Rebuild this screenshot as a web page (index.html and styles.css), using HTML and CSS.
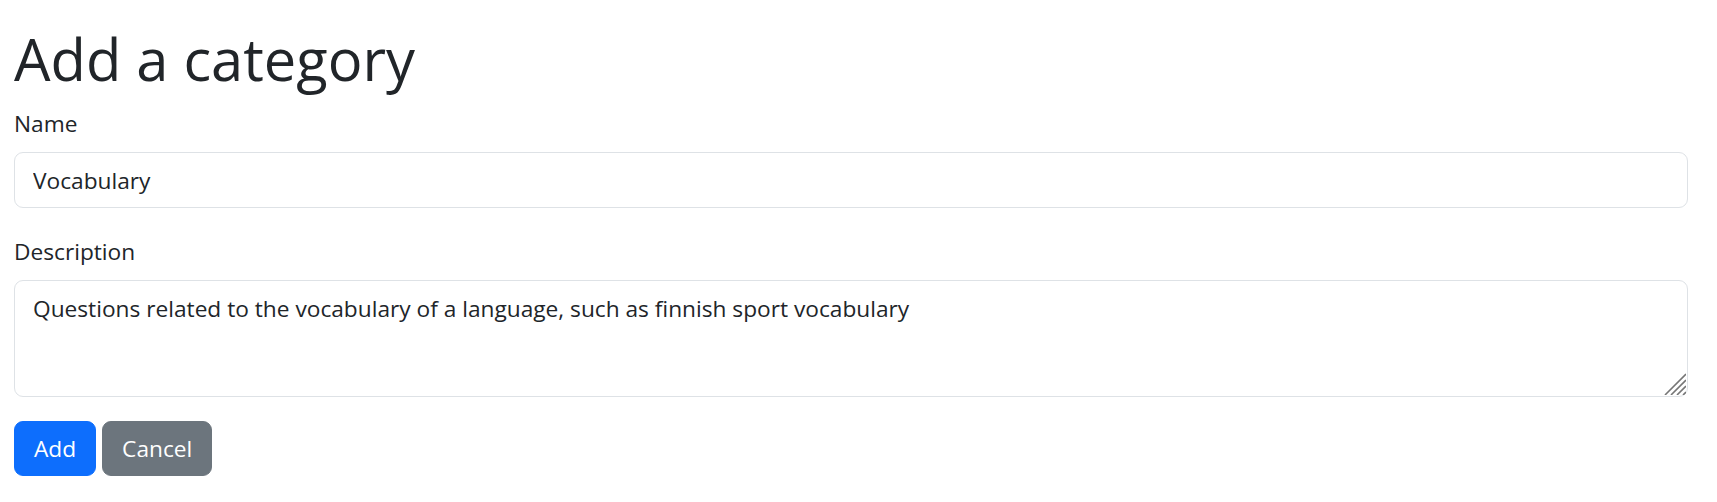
FILE: index.html
```html
<!DOCTYPE html>
<html lang="en">
<head>
<meta charset="utf-8">
<title>Add a category</title>
<link rel="stylesheet" href="styles.css">
</head>
<body>
<main class="page">
  <h1 class="title">Add a category</h1>
  <form class="form">
    <div class="field">
      <label class="label" for="name">Name</label>
      <input class="control" id="name" type="text" value="Vocabulary">
    </div>
    <div class="field">
      <label class="label" for="desc">Description</label>
      <div class="textarea-wrap">
        <textarea class="control textarea" id="desc">Questions related to the vocabulary of a language, such as finnish sport vocabulary</textarea>
        <svg class="grip" width="22" height="22" viewBox="0 0 22 22" aria-hidden="true">
          <path d="M22 1 L1 22 M22 7 L7 22 M22 13 L13 22 M22 19 L19 22" stroke="#767676" stroke-width="1.6" fill="none"/>
        </svg>
      </div>
    </div>
    <div class="actions">
      <button type="button" class="btn btn-primary">Add</button>
      <button type="button" class="btn btn-secondary">Cancel</button>
    </div>
  </form>
</main>
</body>
</html>
```
FILE: styles.css
```css
html, body {
  margin: 0;
  background: #fff;
}
body {
  font-family: "Open Sans", "Noto Sans", sans-serif;
  font-size: 22.7px;
  line-height: 36px;
  color: #212529;
}
.page {
  padding: 24px 29px 0 14px;
}
.title {
  margin: 0 0 9.4px;
  font-size: 57.8px;
  line-height: 70.6px;
  font-weight: 400;
  color: #212529;
}
.form {
  display: flex;
  flex-direction: column;
}
.field {
  display: flex;
  flex-direction: column;
  margin-bottom: 24px;
}
.label {
  display: block;
  padding-top: 2px;
  margin-bottom: 10px;
  line-height: 36px;
}
.control {
  display: block;
  box-sizing: border-box;
  width: 100%;
  height: 56px;
  margin: 0;
  padding: 10px 18px 8px;
  font-family: inherit;
  font-size: 22.7px;
  line-height: 36px;
  color: #212529;
  background: #fff;
  border: 1px solid #dee2e6;
  border-radius: 9px;
  outline: none;
}
.textarea-wrap {
  position: relative;
}
.textarea {
  height: 117px;
  resize: none;
}
.grip {
  position: absolute;
  right: 2px;
  bottom: 2px;
  pointer-events: none;
}
.actions {
  display: flex;
  gap: 6px;
}
.btn {
  box-sizing: border-box;
  height: 55px;
  padding: 2px 19px 0;
  font-family: inherit;
  font-size: 22.7px;
  line-height: 36px;
  color: #fff;
  border: 1px solid transparent;
  border-radius: 9px;
  cursor: pointer;
}
.btn-primary {
  background: #0d6efd;
  border-color: #0d6efd;
}
.btn-secondary {
  background: #6c757d;
  border-color: #6c757d;
}
```
